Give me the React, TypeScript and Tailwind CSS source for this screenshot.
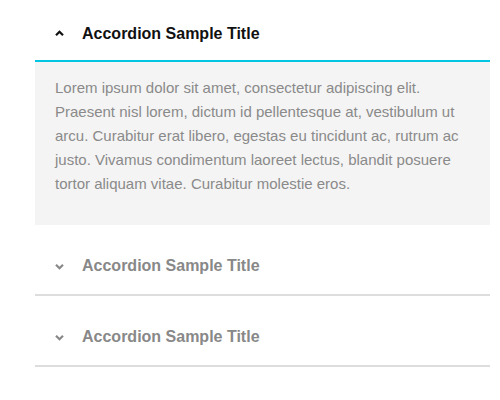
import React from "react";

function ChevronUp() {
  return (
    <svg width="9" height="9" viewBox="0 0 9 9" className="block">
      <polyline points="1,6.3 4.5,2.8 8,6.3" fill="none" stroke="#111" strokeWidth="2.2" />
    </svg>
  );
}

function ChevronDown() {
  return (
    <svg width="9" height="9" viewBox="0 0 9 9" className="block">
      <polyline points="1,2.8 4.5,6.3 8,2.8" fill="none" stroke="#888" strokeWidth="2.2" />
    </svg>
  );
}

const lines = [
  "Lorem ipsum dolor sit amet, consectetur adipiscing elit.",
  "Praesent nisl lorem, dictum id pellentesque at, vestibulum ut",
  "arcu. Curabitur erat libero, egestas eu tincidunt ac, rutrum ac",
  "justo. Vivamus condimentum laoreet lectus, blandit posuere",
  "tortor aliquam vitae. Curabitur molestie eros.",
];

export default function App() {
  return (
    <div className="w-[500px] h-[400px] bg-white font-['Liberation_Sans',Arial,sans-serif]">
      <div className="ml-[35px] w-[455px]">
        <div className="border-b-2 border-[#00c6e4]">
          <div className="h-[60px] pt-[7px] pl-[20px] flex items-center gap-[18px]">
            <ChevronUp />
            <span className="text-[16px] font-bold text-[#111]">Accordion Sample Title</span>
          </div>
        </div>
        <div className="bg-[#f4f4f4] pl-[20px] pr-[4px] pt-[14px] pb-[29px] text-[15px] leading-[24px] text-[#8a8a8a]">
          {lines.map((l, i) => (
            <div key={i} className="whitespace-nowrap">
              {l}
            </div>
          ))}
        </div>
        {[0, 1].map((i) => (
          <div key={i} className="mt-[10px] border-b-2 border-[#dddddd]">
            <div className="h-[59px] pt-[3px] pl-[20px] flex items-center gap-[18px]">
              <ChevronDown />
              <span className="text-[16px] font-bold text-[#888888]">Accordion Sample Title</span>
            </div>
          </div>
        ))}
      </div>
    </div>
  );
}
